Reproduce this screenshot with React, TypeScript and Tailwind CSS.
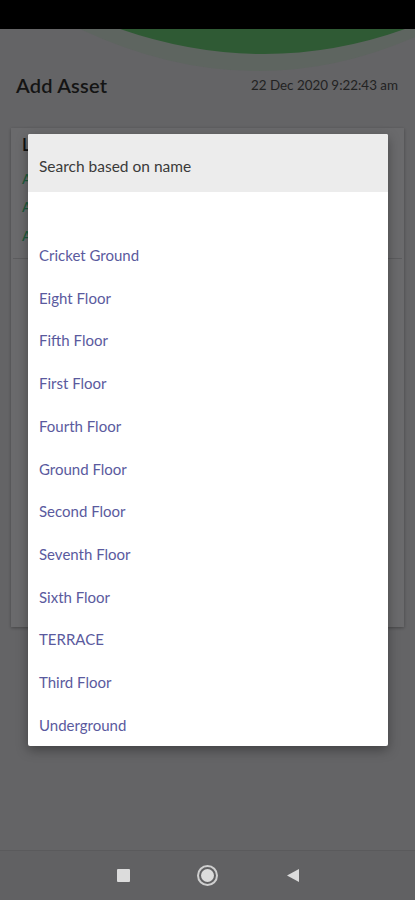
import React from "react"

const floors = [
  "Cricket Ground",
  "Eight Floor",
  "Fifth Floor",
  "First Floor",
  "Fourth Floor",
  "Ground Floor",
  "Second Floor",
  "Seventh Floor",
  "Sixth Floor",
  "TERRACE",
  "Third Floor",
  "Underground",
]

function TopCurve() {
  return (
    <svg
      className="absolute left-0 top-0"
      width="415"
      height="70"
      viewBox="0 0 415 70"
    >
      <path d="M80 0 Q 250 80 415 8 L415 0 Z" fill="#5e6560" />
      <path d="M120 0 Q 265 50 405 0 Z" fill="#2f5a34" />
    </svg>
  )
}

export default function App() {
  return (
    <div
      className="relative w-[415px] h-[900px] overflow-hidden bg-[#646466] flex flex-col"
      style={{ fontFamily: "Lato, 'Open Sans', Arial, sans-serif" }}
    >
      <div className="h-[29px] bg-black shrink-0" />

      <div className="relative flex-1 flex flex-col">
        <TopCurve />

        <div className="flex items-center justify-between px-4 pt-[50px] h-[99px] pb-[37px] shrink-0">
          <span className="text-[20px] font-semibold text-[#141414] tracking-[0.2px]">
            Add Asset
          </span>
          <span className="text-[13.4px] text-[#222] pr-[1px]">
            22 Dec 2020 9:22:43 am
          </span>
        </div>

        <div className="mx-[11px] h-[499px] bg-[#6a6a6c] shadow-[0_1px_3px_rgba(0,0,0,0.3)] flex flex-col">
          <div className="px-[11px] pt-[6px] flex flex-col">
            <span className="text-[17px] font-semibold text-[#111] leading-[22px]">
              L
            </span>
            <span className="text-[14px] font-semibold text-[#1f5a3c] mt-[12px]">
              A
            </span>
            <span className="text-[14px] font-semibold text-[#1f5a3c] mt-[7px]">
              A
            </span>
            <span className="text-[14px] font-semibold text-[#1f5a3c] mt-[8px]">
              A
            </span>
          </div>
          <div className="mt-[12px] mx-[2px] flex-1 border-t border-[#5c5c5e]" />
        </div>

        <div className="flex-1" />

        <div className="h-[50px] bg-[#616163] flex items-center justify-center shrink-0 border-t border-[#5a5a5c]">
          <div className="flex items-center w-[184px] justify-between pl-[1px]">
            <div className="w-[13px] h-[13px] bg-[#dcdcdc] rounded-[1px]" />
            <div className="w-[21px] h-[21px] rounded-full border-[2px] border-[#cfcfcf] flex items-center justify-center">
              <div className="w-[13px] h-[13px] rounded-full bg-[#dcdcdc]" />
            </div>
            <svg width="14" height="15" viewBox="0 0 14 15">
              <path d="M13 1 L1 7.5 L13 14 Z" fill="#dcdcdc" />
            </svg>
          </div>
        </div>
      </div>

      <div className="absolute left-[28px] top-[134px] w-[360px] h-[612px] bg-white rounded-[2px] shadow-[0_4px_12px_rgba(0,0,0,0.35)] flex flex-col overflow-hidden">
        <div className="h-[58px] bg-[#ececec] flex items-center px-[11px] pt-[7px] shrink-0">
          <span className="text-[15.5px] text-[#3a3a3a]">Search based on name</span>
        </div>
        <div className="h-[42px] shrink-0" />
        <ul className="flex flex-col">
          {floors.map((f) => (
            <li
              key={f}
              className="h-[42.7px] flex items-center px-[11px] text-[15px] text-[#5a5a9e]"
            >
              {f}
            </li>
          ))}
        </ul>
      </div>
    </div>
  )
}
